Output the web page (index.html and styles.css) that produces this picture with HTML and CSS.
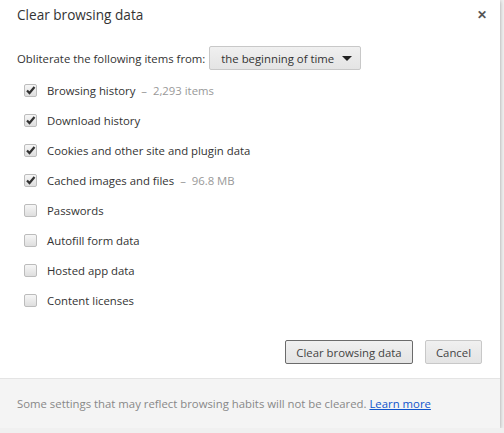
FILE: index.html
```html
<!DOCTYPE html>
<html lang="en">
<head>
    <meta charset="UTF-8">
    <title>Clear browsing data</title>
    <link rel="stylesheet" href="styles.css">
</head>
<body>
    <div class="dialog">
        <div class="header">
            <h1>Clear browsing data</h1>
            <span class="close">&#x2715;</span>
        </div>

        <div class="content">
            <div class="period">
                <span>Obliterate the following items from:</span>
                <div class="select">
                    <span>the beginning of time</span>
                    <span class="arrow"></span>
                </div>
            </div>

            <ul class="items">
                <li><span class="box checked"></span>Browsing history <span class="count">&ndash;&nbsp; 2,293 items</span></li>
                <li><span class="box checked"></span>Download history</li>
                <li><span class="box checked"></span>Cookies and other site and plugin data</li>
                <li><span class="box checked"></span>Cached images and files <span class="count">&ndash;&nbsp; 96.8 MB</span></li>
                <li><span class="box"></span>Passwords</li>
                <li><span class="box"></span>Autofill form data</li>
                <li><span class="box"></span>Hosted app data</li>
                <li><span class="box"></span>Content licenses</li>
            </ul>

            <div class="buttons">
                <button class="default">Clear browsing data</button>
                <button>Cancel</button>
            </div>
        </div>

        <div class="footer">
            Some settings that may reflect browsing habits will not be cleared. <a href="#">Learn more</a>
        </div>
    </div>
</body>
</html>
```

FILE: styles.css
```css
body {
    margin: 0;
    background: #f0f0f0;
    font-family: "Open Sans", "Noto Sans", sans-serif;
    font-size: 11.35px;
    color: #333;
}
.dialog {
    width: 500px;
    height: 428px;
    background: #fff;
    box-shadow: 0 1px 4px rgba(0, 0, 0, 0.35);
    display: flex;
    flex-direction: column;
}
.header {
    display: flex;
    justify-content: space-between;
    align-items: flex-start;
    padding: 5px 13px 0 17px;
    height: 40px;
    box-sizing: border-box;
}
.header h1 {
    margin: 0;
    font-size: 13.6px;
    font-weight: normal;
    color: #333;
}
.close {
    font-size: 12px;
    font-weight: bold;
    color: #555;
    margin-top: 1px;
}
.content {
    padding: 0 18px 0 17px;
    flex: 1;
}
.period {
    display: flex;
    align-items: center;
    gap: 4px;
    height: 36px;
}
.select {
    display: flex;
    align-items: center;
    justify-content: space-between;
    width: 152px;
    height: 24px;
    box-sizing: border-box;
    padding: 0 8px 0 11px;
    background: linear-gradient(#f0f0f0, #e4e4e4);
    border: 1px solid #c8c8c8;
    border-radius: 2px;
}
.arrow {
    width: 0;
    height: 0;
    border-left: 5px solid transparent;
    border-right: 5px solid transparent;
    border-top: 5px solid #222;
}
.items {
    list-style: none;
    margin: 0;
    padding: 0;
}
.items li {
    display: flex;
    align-items: center;
    height: 30px;
    padding-left: 7px;
    padding-bottom: 1px;
    box-sizing: border-box;
}
.box {
    width: 13px;
    height: 13px;
    box-sizing: border-box;
    margin-right: 10px;
    border: 1px solid #bcbcbc;
    border-radius: 2px;
    background: linear-gradient(#f6f6f6, #dedede);
}
.box.checked {
    background: url("data:image/svg+xml,%3Csvg xmlns='http://www.w3.org/2000/svg' width='11' height='11'%3E%3Cpath d='M2 5.5l2.5 2.5L9.5 2' fill='none' stroke='%23333' stroke-width='2.2'/%3E%3C/svg%3E") center no-repeat, linear-gradient(#f6f6f6, #dedede);
}
.count {
    color: #999;
    margin-left: 6px;
}
.buttons {
    display: flex;
    justify-content: flex-end;
    gap: 12px;
    margin-top: 24px;
}
.buttons button {
    height: 24px;
    padding: 0;
    white-space: nowrap;
    font-family: inherit;
    font-size: 11.35px;
    color: #444;
    background: linear-gradient(#f0f0f0, #e4e4e4);
    border: 1px solid #c8c8c8;
    border-radius: 2px;
}
.buttons button.default {
    width: 128px;
    border-color: #6b6b6b;
}
.buttons button:last-child {
    width: 57px;
}
.footer {
    height: 50px;
    box-sizing: border-box;
    border-top: 1px solid #e4e4e4;
    background: #f4f4f4;
    padding: 17px 17px 0;
    color: #888;
}
.footer a {
    color: #15c;
}
```
